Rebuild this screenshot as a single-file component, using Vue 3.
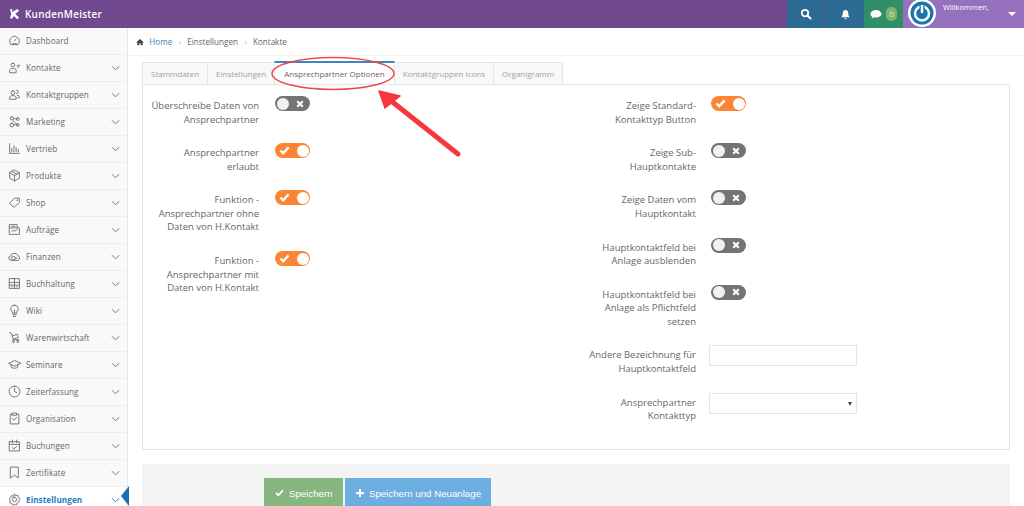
<template>
  <div class="page">
    <header class="topbar">
      <div class="brand">
        <svg class="brand-mark" viewBox="0 0 12 12"><path d="M1 .8h2.600L3.400 4.200 8.800.6 11 2.400 6.800 6l4.200 3.800L9 11.600 5.400 8.200 3 11.400 1 10l1.500-4z" fill="#fff"/></svg>
        <span>KundenMeister</span>
      </div>
      <div class="top-actions">
        <div class="top-btn blue first">
          <svg viewBox="0 0 24 24" width="12" height="12"><circle cx="10" cy="10" r="6.500" fill="none" stroke="#fff" stroke-width="3.500"/><path d="m15 15 6 6" stroke="#fff" stroke-width="4" stroke-linecap="round"/></svg>
        </div>
        <div class="top-btn blue">
          <svg viewBox="0 0 24 24" width="11" height="11"><path d="M12 2c-4 0-6 3-6 7 0 5-2 7-3 9h18c-1-2-3-4-3-9 0-4-2-7-6-7zM9.500 20a2.500 2.500 0 0 0 5 0z" fill="#fff"/></svg>
        </div>
        <div class="top-btn green">
          <svg viewBox="0 0 24 24" width="12" height="12"><path d="M12 4C6 4 1 7.500 1 12c0 2.500 1.500 4.500 4 6-.3 1.200-1 2.300-2 3 2.300-.2 4.200-1 5.500-2.300 1.100.2 2.300.3 3.500.3 6 0 11-3.500 11-7s-5-8-11-8z" fill="#fff"/></svg>
          <span class="badge">0</span>
        </div>
        <div class="user">
          <div class="avatar">
            <svg viewBox="0 0 28 28" width="28" height="28">
              <circle cx="14" cy="14" r="14" fill="#fff"/>
              <circle cx="14" cy="14" r="11.500" fill="#1b74ab"/>
              <circle cx="14" cy="14.500" r="7" fill="none" stroke="#fff" stroke-width="2.500"/>
              <path d="M14 5v9" stroke="#1b74ab" stroke-width="5"/>
              <path d="M14 6v8" stroke="#fff" stroke-width="2.500"/>
            </svg>
          </div>
          <span class="welcome">Willkommen,</span>
          <span class="caret"></span>
        </div>
      </div>
    </header>

    <div class="body">
      <aside class="sidebar">
        <div v-for="item in menu" :key="item.label" class="menu-row" :class="{ active: item.active }">
          <svg class="menu-icon" viewBox="0 0 24 24" fill="none" stroke="#666" stroke-width="1.600" stroke-linecap="round" stroke-linejoin="round">
            <path :d="item.icon" />
          </svg>
          <span class="menu-label">{{ item.label }}</span>
          <svg v-if="!item.noArrow" class="chevron" viewBox="0 0 10 6"><path d="M1 1l4 4 4-4" fill="none" stroke-width="1.100" /></svg>
          <span v-if="item.active" class="notch"></span>
        </div>
      </aside>

      <main class="main">
        <nav class="crumbs">
          <svg class="home-icon" viewBox="0 0 24 24"><path d="M12 3 1 13l1.500 1.500L4 13v9h6v-6h4v6h6v-9l1.500 1.500L23 13z" fill="#444"/></svg>
          <a class="crumb-link">Home</a>
          <span class="sep">›</span>
          <span>Einstellungen</span>
          <span class="sep">›</span>
          <span>Kontakte</span>
        </nav>

        <div class="content">
          <div class="tabs">
            <div v-for="tab in tabs" :key="tab" class="tab" :class="{ current: tab === activeTab }">{{ tab }}</div>
          </div>

          <section class="panel">
            <div class="col col-left">
              <div v-for="f in leftFields" :key="f.label" class="field">
                <label>{{ f.label }}</label>
                <span class="toggle" :class="f.on ? 'on' : 'off'">
                  <svg v-if="f.on" class="mark" viewBox="0 0 12 10"><path d="M1.500 5 4.500 8 10.500 1.500" fill="none" stroke="#fff" stroke-width="2.600"/></svg>
                  <svg v-else class="mark" viewBox="0 0 10 10"><path d="M1.500 1.500l7 7m0-7-7 7" fill="none" stroke="#fff" stroke-width="2.600"/></svg>
                  <i class="knob"></i>
                </span>
              </div>
            </div>
            <div class="col col-right">
              <div v-for="f in rightFields" :key="f.label" class="field">
                <label>{{ f.label }}</label>
                <span class="toggle" :class="f.on ? 'on' : 'off'">
                  <svg v-if="f.on" class="mark" viewBox="0 0 12 10"><path d="M1.500 5 4.500 8 10.500 1.500" fill="none" stroke="#fff" stroke-width="2.600"/></svg>
                  <svg v-else class="mark" viewBox="0 0 10 10"><path d="M1.500 1.500l7 7m0-7-7 7" fill="none" stroke="#fff" stroke-width="2.600"/></svg>
                  <i class="knob"></i>
                </span>
              </div>
              <div class="field">
                <label>Andere Bezeichnung für Hauptkontaktfeld</label>
                <input class="text-input" type="text" />
              </div>
              <div class="field">
                <label>Ansprechpartner Kontakttyp</label>
                <div class="select-box"><span class="select-arrow"></span></div>
              </div>
            </div>
          </section>

          <div class="footer">
            <button class="btn btn-green">
              <svg viewBox="0 0 12 10" width="9" height="8"><path d="M1.500 5 4.500 8 10.500 1.500" fill="none" stroke="#fff" stroke-width="2.400"/></svg>
              Speichern
            </button>
            <button class="btn btn-blue">
              <svg viewBox="0 0 10 10" width="8" height="8"><path d="M5 0v10M0 5h10" fill="none" stroke="#fff" stroke-width="2.400"/></svg>
              Speichern und Neuanlage
            </button>
          </div>
        </div>
      </main>
    </div>

    <svg class="annotation" viewBox="0 0 1024 506" width="1024" height="506">
      <ellipse cx="333" cy="73.500" rx="61" ry="16" fill="none" stroke="#ee4a4d" stroke-width="1.500"/>
      <path d="M458 154 390 100" stroke="#f4383d" stroke-width="5" stroke-linecap="round"/>
      <path d="M379 91 400 96 385 108z" fill="#f4383d" stroke="#f4383d" stroke-width="1.500" stroke-linejoin="round"/>
    </svg>
  </div>
</template>

<script setup>
const menu = [
  { label: 'Dashboard', noArrow: true, icon: 'M5 19a9 9 0 1 1 14 0zM12 13l3-4M8 19v-1h8v1' },
  { label: 'Kontakte', icon: 'M9 4a3.500 3.500 0 1 1 0 7 3.500 3.500 0 0 1 0-7zM3 21v-4c0-2 2-3 6-3s6 1 6 3v4zM17 8h5M17 11h3' },
  { label: 'Kontaktgruppen', icon: 'M9 5a3 3 0 1 1 0 7 3 3 0 0 1 0-7zM16 4a3 3 0 1 1 0 6M3 20v-2c0-2 2-4 6-4s6 2 6 4v2zM17 13c3 0 4 2 4 4v1h-3' },
  { label: 'Marketing', icon: 'M7 3a3 3 0 1 1 0 6 3 3 0 0 1 0-6zM18 5a2.500 2.500 0 1 1 0 5 2.500 2.500 0 0 1 0-5zM7 15a3.500 3.500 0 1 1 0 7 3.500 3.500 0 0 1 0-7zM18 16a2.500 2.500 0 1 1 0 5 2.500 2.500 0 0 1 0-5zM10 7h6M9 10l7 7M10 18l6 0' },
  { label: 'Vertrieb', icon: 'M3 3v18h18M7 18v-6M11 18V7M15 18v-8M19 18v-4' },
  { label: 'Produkte', icon: 'M12 2l9 5v10l-9 5-9-5V7zM3 7l9 5 9-5M12 12v10M7.500 4.500l9 5' },
  { label: 'Shop', icon: 'M13 4h8v8L11 21l-8-7zM17 7.500a.5.5 0 1 1 0 1 .5.5 0 0 1 0-1z' },
  { label: 'Aufträge', icon: 'M3 3h14v6h4v12H3zM3 9h14M7 6h6M7 16l3-3 3 2 4-3' },
  { label: 'Finanzen', icon: 'M6 19a4 4 0 0 1-1-8 7 7 0 0 1 13-1 5 5 0 0 1 1 9zM10 19a3.500 3.500 0 1 1 0-7 3.500 3.500 0 0 1 0 7zM14 15h3' },
  { label: 'Buchhaltung', icon: 'M3 3h18v18H3zM3 10h18M3 15h18M12 3v18M7 18h1M16 18h1' },
  { label: 'Wiki', icon: 'M12 2a7 7 0 0 1 4 12.700V17H8v-2.300A7 7 0 0 1 12 2zM9 20h6M10 23h4M12 17v-6' },
  { label: 'Warenwirtschaft', icon: 'M3 3l3 1 4 12h10M8 9l9-3 2 6-9 3M10 21a2 2 0 1 1 0-4 2 2 0 0 1 0 4zM18 21a2 2 0 1 1 0-4 2 2 0 0 1 0 4z' },
  { label: 'Seminare', icon: 'M12 5 1 10l11 5 11-5zM6 13v4c3 2.500 9 2.500 12 0v-4' },
  { label: 'Zeiterfassung', icon: 'M12 2a10 10 0 1 1 0 20 10 10 0 0 1 0-20zM12 6v6l4 2' },
  { label: 'Organisation', icon: 'M8 4H4v18h16V4h-4M8 2h8v4H8zM8 12l3 3 5-5' },
  { label: 'Buchungen', icon: 'M3 5h18v17H3zM3 10h18M8 2v5M16 2v5M8 16l3 2 5-4' },
  { label: 'Zertifikate', icon: 'M5 2h14v20l-7-5-7 5z' },
  { label: 'Einstellungen', active: true, icon: 'M12 2l2 3 4-1 1 4 3 2-2 3 1 3-4 2-1 4-4-1-3 2-2-4-4-1 1-4-2-3 3-2 1-4 4 1zM12 8a4 4 0 1 1 0 8 4 4 0 0 1 0-8z' }
]

const tabs = ['Stammdaten', 'Einstellungen', 'Ansprechpartner Optionen', 'Kontaktgruppen Icons', 'Organigramm']
const activeTab = 'Ansprechpartner Optionen'

const leftFields = [
  { label: 'Überschreibe Daten von Ansprechpartner', on: false },
  { label: 'Ansprechpartner erlaubt', on: true },
  { label: 'Funktion - Ansprechpartner ohne Daten von H.Kontakt', on: true },
  { label: 'Funktion - Ansprechpartner mit Daten von H.Kontakt', on: true }
]

const rightFields = [
  { label: 'Zeige Standard-Kontakttyp Button', on: true },
  { label: 'Zeige Sub-Hauptkontakte', on: false },
  { label: 'Zeige Daten vom Hauptkontakt', on: false },
  { label: 'Hauptkontaktfeld bei Anlage ausblenden', on: false },
  { label: 'Hauptkontaktfeld bei Anlage als Pflichtfeld setzen', on: false }
]
</script>

<style>
html, body {
  margin: 0;
  background: #fff;
  overflow: hidden;
}
</style>

<style scoped>
.page {
  position: relative;
  width: 1024px;
  height: 506px;
  overflow: hidden;
  font-family: "Open Sans", sans-serif;
  font-size: 9.5px;
  color: #666;
  background: #fff;
}

.topbar {
  display: flex;
  justify-content: space-between;
  height: 28px;
  background: #70498e;
}

.brand {
  display: flex;
  align-items: center;
  gap: 5px;
  padding-left: 9px;
  color: #fff;
  font-size: 9.900px;
  font-weight: 600;
  letter-spacing: 0.3px;
}

.brand-mark {
  width: 11px;
  height: 12px;
}

.top-actions {
  display: flex;
}

.top-btn {
  display: flex;
  align-items: center;
  justify-content: center;
  width: 38px;
  gap: 4px;
}

.top-btn.first {
  margin-right: 1px;
}

.blue {
  background: #2c6b93;
}

.green {
  width: 39px;
  background: #2f8f66;
}

.badge {
  width: 11px;
  height: 14px;
  border-radius: 5px;
  background: #80b36c;
  color: #e5f0d8;
  font-size: 8px;
  line-height: 14px;
  text-align: center;
}

.user {
  position: relative;
  display: flex;
  width: 121px;
  background: #9570bc;
}

.avatar {
  position: absolute;
  left: 5px;
  top: -1px;
}

.welcome {
  position: absolute;
  left: 40px;
  top: 2px;
  color: #fff;
  font-size: 7.500px;
}

.caret {
  position: absolute;
  right: 8px;
  top: 12px;
  border: 4px solid transparent;
  border-top-color: #fff;
  border-bottom: 0;
}

.body {
  display: flex;
  height: 478px;
}

.sidebar {
  flex: none;
  width: 128px;
  background: #f9f9f9;
  border-right: 1px solid #e8e8e8;
  box-sizing: border-box;
}

.menu-row {
  position: relative;
  display: flex;
  align-items: center;
  height: 27px;
  padding: 0 7px 0 8px;
  border-bottom: 1px solid #eee;
  box-sizing: border-box;
}

.menu-row.active {
  background: #fff;
  color: #1f7cc4;
  font-weight: 700;
}

.menu-icon {
  flex: none;
  width: 13px;
  height: 13px;
  margin-right: 5px;
  margin-top: -1px;
}

.menu-label {
  flex: 1;
  font-size: 8.100px;
  margin-top: -1px;
  letter-spacing: 0.1px;
}

.chevron {
  width: 9px;
  height: 6px;
  stroke: #777;
}

.active .chevron {
  stroke: #1f7cc4;
}

.notch {
  position: absolute;
  right: -2px;
  top: -1px;
  width: 0;
  height: 0;
  border: 10px solid transparent;
  border-left: 0;
  border-right: 8px solid #1b6fb4;
}

.main {
  flex: 1;
  min-width: 0;
}

.crumbs {
  display: flex;
  align-items: center;
  gap: 6.300px;
  height: 28px;
  padding-left: 8px;
  border-bottom: 1px solid #f0f0f0;
  box-sizing: border-box;
  font-size: 8.100px;
  color: #666;
}

.home-icon {
  width: 8px;
  height: 8px;
  margin-right: -1px;
}

.crumb-link {
  color: #3a87c0;
}

.sep {
  color: #bbb;
}

.content {
  padding: 6px 14px 0;
}

.tabs {
  display: flex;
  align-items: flex-end;
  height: 22px;
}

.tab {
  box-sizing: border-box;
  height: 22px;
  padding: 0 8px;
  border: 1px solid #e0e6ea;
  border-bottom: 0;
  margin-right: -1px;
  background: #f8f8f8;
  color: #a2a2a2;
  font-size: 8px;
  line-height: 21px;
  white-space: nowrap;
}

.tab.current {
  position: relative;
  height: 23px;
  padding: 0 9px;
  background: #fff;
  color: #666;
  border-top: 2px solid #3a87c0;
}

.panel {
  box-sizing: border-box;
  display: flex;
  height: 366px;
  padding-top: 14px;
  border: 1px solid #e0e6ea;
}

.col-left {
  width: 444px;
  padding-left: 7px;
  box-sizing: border-box;
}

.field {
  display: flex;
  align-items: flex-start;
  margin-bottom: 20.200px;
}

.field label {
  flex: none;
  width: 109px;
  line-height: 13.500px;
  text-align: right;
  font-size: 9.500px;
  color: #666;
}

.col-left label {
  margin-right: 16px;
}

.col-right label {
  margin-right: 15px;
}

.toggle {
  position: relative;
  flex: none;
  display: block;
  width: 35px;
  height: 15px;
  margin-top: -3px;
  border-radius: 8px;
}

.toggle.on {
  background: #fb8532;
}

.toggle.off {
  background: #747474;
}

.knob {
  position: absolute;
  top: 1.500px;
  width: 12px;
  height: 12px;
  border-radius: 50%;
  background: #f1f1f1;
}

.on .knob {
  right: 1.500px;
  background: #fff;
}

.off .knob {
  left: 1.500px;
}

.mark {
  position: absolute;
}

.on .mark {
  left: 4px;
  top: 3px;
  width: 11px;
  height: 9px;
}

.off .mark {
  right: 6px;
  top: 3.500px;
  width: 8px;
  height: 8px;
}

.text-input,
.select-box {
  position: relative;
  box-sizing: border-box;
  width: 148px;
  height: 21px;
  margin: -3px 0 0 -2px;
  padding: 0;
  border: 1px solid #e4e4e4;
  background: #fff;
  outline: 0;
}

.select-arrow {
  position: absolute;
  right: 4px;
  top: 8px;
  border: 2.500px solid transparent;
  border-top: 4px solid #444;
  border-bottom: 0;
}

.footer {
  display: flex;
  gap: 2px;
  height: 42px;
  margin-top: 14px;
  padding: 14px 0 0 122px;
  box-sizing: border-box;
  background: #f4f4f4;
}

.btn {
  display: flex;
  align-items: center;
  gap: 5px;
  height: 30px;
  padding: 0 0 0 11px;
  border: 0;
  color: #fff;
  font-family: "Liberation Sans", sans-serif;
  font-size: 9.700px;
  white-space: nowrap;
}

.btn-green {
  width: 79px;
  background: #86b77f;
}

.btn-blue {
  width: 146px;
  background: #6caee0;
}

.annotation {
  position: absolute;
  left: 0;
  top: 0;
  pointer-events: none;
}
</style>
